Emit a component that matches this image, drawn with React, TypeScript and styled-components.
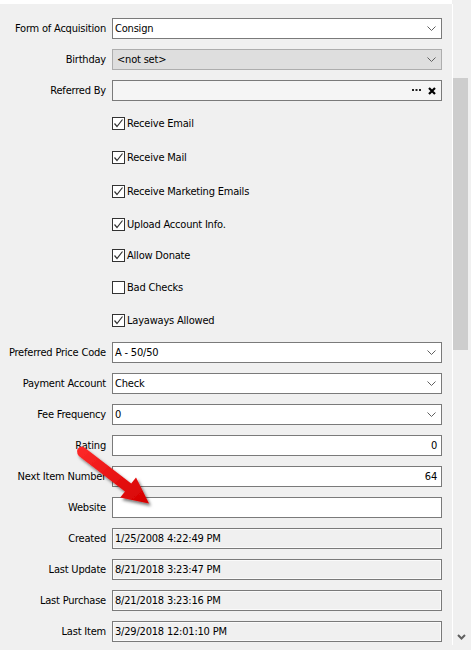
import styled, { createGlobalStyle } from "styled-components";

const GlobalStyle = createGlobalStyle`
  body {
    margin: 0;
    background: #f0f0f0;
  }
`;

type CheckItem = { label: string; checked: boolean; height: number };

const checks: CheckItem[] = [
  { label: "Receive Email", checked: true, height: 34 },
  { label: "Receive Mail", checked: true, height: 34 },
  { label: "Receive Marketing Emails", checked: true, height: 34 },
  { label: "Upload Account Info.", checked: true, height: 32 },
  { label: "Allow Donate", checked: true, height: 31 },
  { label: "Bad Checks", checked: false, height: 32 },
  { label: "Layaways Allowed", checked: true, height: 34 },
];

const readOnly = [
  ["Created", "1/25/2008 4:22:49 PM"],
  ["Last Update", "8/21/2018 3:23:47 PM"],
  ["Last Purchase", "8/21/2018 3:23:16 PM"],
  ["Last Item", "3/29/2018 12:01:10 PM"],
];

const Chevron = () => (
  <svg width="9" height="5" viewBox="0 0 9 5">
    <path d="M0.5 0.5 L4.5 4.5 L8.5 0.5" fill="none" stroke="#606060" strokeWidth="1" />
  </svg>
);

const Combo = ({ value, disabled }: { value: string; disabled?: boolean }) => (
  <ComboBox $disabled={disabled}>
    <span>{value}</span>
    <Chevron />
  </ComboBox>
);

const Row = ({ label, children }: { label: string; children: React.ReactNode }) => (
  <FieldRow>
    <Label>{label}</Label>
    {children}
  </FieldRow>
);

const CheckMark = () => (
  <svg width="11" height="11" viewBox="0 0 11 11">
    <path d="M1.5 5.5 L4 8.5 L9.5 1.5" fill="none" stroke="#333" strokeWidth="1.2" />
  </svg>
);

const RedArrow = () => (
  <ArrowLayer width="95" height="80" viewBox="0 0 95 80">
    <defs>
      <linearGradient id="redg" x1="0" y1="0" x2="1" y2="1">
        <stop offset="0" stopColor="#ff2a2a" />
        <stop offset="1" stopColor="#d40000" />
      </linearGradient>
      <filter id="shadow" x="-20%" y="-20%" width="150%" height="150%">
        <feDropShadow dx="2" dy="2.5" stdDeviation="1.6" floodColor="#000" floodOpacity="0.55" />
      </filter>
    </defs>
    <path
      d="M15.1 8 L61.2 43.6 L66 37.6 L79 63.5 L50.2 57.6 L55 51.6 L8.9 16 Q5 11 9 7.5 Q12 5.5 15.1 8 Z"
      fill="url(#redg)"
      filter="url(#shadow)"
    />
  </ArrowLayer>
);

export default function App() {
  return (
    <>
      <GlobalStyle />
      <Window>
        <Form>
          <TopStrip />
          <Fields>
            <Row label="Form of Acquisition">
              <Combo value="Consign" />
            </Row>
            <Row label="Birthday">
              <Combo value="<not set>" disabled />
            </Row>
            <Row label="Referred By">
              <LookupBox>
                <svg width="9" height="3" viewBox="0 0 9 3">
                  <rect x="0" y="0" width="2" height="2" fill="#222" />
                  <rect x="3.5" y="0" width="2" height="2" fill="#222" />
                  <rect x="7" y="0" width="2" height="2" fill="#222" />
                </svg>
                <svg width="8" height="8" viewBox="0 0 8 8">
                  <path d="M1 1 L7 7 M7 1 L1 7" stroke="#000" strokeWidth="2.2" />
                </svg>
              </LookupBox>
            </Row>
            {checks.map((c) => (
              <CheckRow key={c.label} $height={c.height}>
                <Box>{c.checked && <CheckMark />}</Box>
                <span>{c.label}</span>
              </CheckRow>
            ))}
            <Row label="Preferred Price Code">
              <Combo value="A - 50/50" />
            </Row>
            <Row label="Payment Account">
              <Combo value="Check" />
            </Row>
            <Row label="Fee Frequency">
              <Combo value="0" />
            </Row>
            <Row label="Rating">
              <TextBox $align="right">0</TextBox>
            </Row>
            <Row label="Next Item Number">
              <TextBox $align="right">64</TextBox>
            </Row>
            <Row label="Website">
              <TextBox />
            </Row>
            {readOnly.map(([label, value]) => (
              <Row key={label} label={label}>
                <ReadOnlyBox>{value}</ReadOnlyBox>
              </Row>
            ))}
          </Fields>
        </Form>
        <ScrollBar>
          <Thumb />
          <ScrollSpacer />
          <DownButton>
            <svg width="9" height="6" viewBox="0 0 9 6">
              <path d="M1 1 L4.5 4.5 L8 1" fill="none" stroke="#606060" strokeWidth="2" />
            </svg>
          </DownButton>
        </ScrollBar>
        <RedArrow />
      </Window>
    </>
  );
}

const Window = styled.div`
  position: relative;
  width: 471px;
  height: 650px;
  overflow: hidden;
  display: flex;
  background: #f0f0f0;
  font-family: "DejaVu Sans Condensed", "Liberation Sans", sans-serif;
  font-size: 11px;
  letter-spacing: -0.2px;
  color: #000;
`;

const Form = styled.div`
  width: 452px;
  display: flex;
  flex-direction: column;
`;

const TopStrip = styled.div`
  height: 4px;
  background: #fff;
`;

const Fields = styled.div`
  padding-top: 9px;
  display: flex;
  flex-direction: column;
`;

const FieldRow = styled.div`
  height: 31px;
  display: flex;
  align-items: center;
  gap: 6px;
`;

const Label = styled.div`
  width: 106px;
  flex-shrink: 0;
  text-align: right;
  white-space: nowrap;
`;

const BaseBox = styled.div`
  box-sizing: border-box;
  width: 330px;
  height: 21px;
  border: 1px solid #7a7a7a;
  display: flex;
  align-items: center;
  white-space: nowrap;
`;

const ComboBox = styled(BaseBox)<{ $disabled?: boolean }>`
  justify-content: space-between;
  padding: 0 5px 0 ${(p) => (p.$disabled ? 4 : 2)}px;
  background: ${(p) => (p.$disabled ? "#dedede" : "#fff")};
  border-color: ${(p) => (p.$disabled ? "#adadad" : "#7a7a7a")};
`;

const LookupBox = styled(BaseBox)`
  justify-content: flex-end;
  gap: 7px;
  padding-right: 5px;
  background: #f5f5f5;
`;

const TextBox = styled(BaseBox)<{ $align?: "left" | "right" }>`
  background: #fff;
  justify-content: ${(p) => (p.$align === "right" ? "flex-end" : "flex-start")};
  padding: 0 4px 0 2px;
`;

const ReadOnlyBox = styled(BaseBox)`
  background: #f0f0f0;
  box-shadow: inset 0 0 0 1px #fafafa;
  padding-left: 2px;
`;

const CheckRow = styled.div<{ $height: number }>`
  height: ${(p) => p.$height}px;
  display: flex;
  align-items: center;
  gap: 2px;
  padding-left: 112px;
`;

const Box = styled.div`
  box-sizing: border-box;
  width: 13px;
  height: 13px;
  border: 1px solid #333;
  background: #fff;
  display: flex;
  align-items: center;
  justify-content: center;
`;

const ScrollBar = styled.div`
  width: 18px;
  margin-top: 4px;
  height: 641px;
  border-left: 1px solid #fff;
  display: flex;
  flex-direction: column;
`;

const Thumb = styled.div`
  margin-top: 74px;
  width: 15px;
  height: 272px;
  background: #cdcdcd;
`;

const ScrollSpacer = styled.div`
  flex: 1;
`;

const DownButton = styled.div`
  height: 17px;
  display: flex;
  align-items: center;
  justify-content: center;
  padding-right: 2px;
`;

const ArrowLayer = styled.svg`
  position: absolute;
  left: 70px;
  top: 440px;
  pointer-events: none;
`;
